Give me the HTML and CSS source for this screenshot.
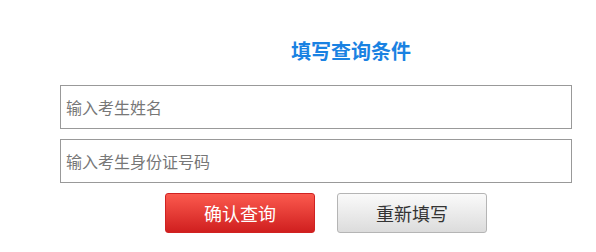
FILE: index.html
```html
<!DOCTYPE html>
<html lang="zh-CN">
<head>
<meta charset="utf-8">
<title>填写查询条件</title>
<link rel="stylesheet" href="styles.css">
</head>
<body>
<div class="form">
  <h2 class="title">填写查询条件</h2>
  <div class="fields">
    <input class="field" type="text" placeholder="输入考生姓名">
    <input class="field" type="text" placeholder="输入考生身份证号码">
  </div>
  <div class="actions">
    <button class="btn btn-primary" type="button">确认查询</button>
    <button class="btn btn-default" type="button">重新填写</button>
  </div>
</div>
</body>
</html>
```
FILE: styles.css
```css
html, body {
  margin: 0;
  padding: 0;
  background: #fff;
}
body {
  font-family: "Microsoft YaHei", "Noto Sans CJK SC", "Noto Sans", sans-serif;
}
.form {
  padding: 38px 0 0 60px;
  width: 512px;
}
.title {
  margin: 0;
  padding-left: 231px;
  font-size: 20px;
  line-height: 26px;
  font-weight: bold;
  color: #1a82e2;
}
.fields {
  margin-top: 21px;
  display: flex;
  flex-direction: column;
  gap: 10px;
}
.field {
  box-sizing: border-box;
  width: 512px;
  height: 44px;
  margin: 0;
  border: 1px solid #999;
  padding: 0 5px;
  font-family: inherit;
  font-size: 16px;
  color: #333;
  outline: none;
  background: #fff;
}
.field::placeholder {
  color: #777;
}
.actions {
  margin-top: 10px;
  padding-left: 105px;
  display: flex;
  gap: 22px;
}
.btn {
  box-sizing: border-box;
  width: 150px;
  height: 40px;
  margin: 0;
  border-radius: 3px;
  font-family: inherit;
  font-size: 18px;
  cursor: pointer;
  padding: 0;
}
.btn-primary {
  color: #fff;
  border: 1px solid #d02222;
  background: linear-gradient(to bottom, #fb5a4e, #d01f1f);
}
.btn-default {
  color: #333;
  border: 1px solid #b5b5b5;
  background: linear-gradient(to bottom, #fafafa, #dcdcdc);
}
```
